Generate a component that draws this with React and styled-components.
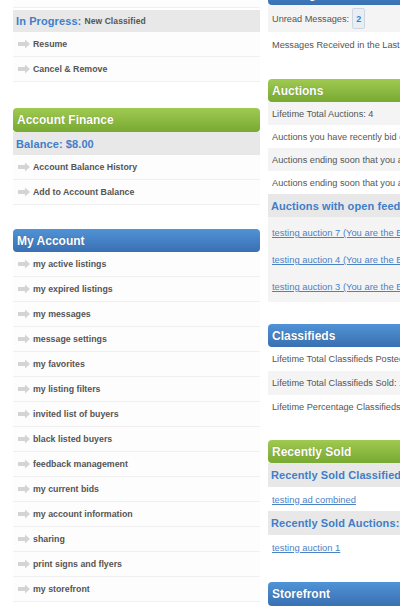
import styled, { createGlobalStyle } from "styled-components";

const GlobalStyle = createGlobalStyle`
  html, body {
    margin: 0;
    padding: 0;
    background: #fff;
    overflow: hidden;
    font-family: "Liberation Sans", Arial, sans-serif;
  }
`;

const Page = styled.div`
  display: flex;
  align-items: flex-start;
  gap: 8px;
  padding-left: 13px;
  width: 700px;
`;

const LeftColumn = styled.div`
  width: 247px;
  flex-shrink: 0;
  margin-top: -17px;
`;

const RightColumn = styled.div`
  width: 320px;
  flex-shrink: 0;
  margin-top: -18px;
`;

const Section = styled.div`
  margin-bottom: ${(p) => p.$gap ?? 24}px;
`;

const Head = styled.div`
  height: ${(p) => p.$h ?? 23}px;
  display: flex;
  align-items: center;
  padding: 0 4px;
  border-radius: 4px;
  color: #fff;
  font-weight: bold;
  font-size: 12px;
  text-shadow: 0 0 1px rgba(0, 0, 0, 0.25);
  background: ${(p) =>
    p.$tone === "green"
      ? "linear-gradient(#a0ca52, #78a932)"
      : "linear-gradient(#5093d6, #3970b2)"};
`;

const SubHead = styled.div`
  height: ${(p) => p.$h ?? 23}px;
  display: flex;
  align-items: center;
  padding: 0 3px;
  margin-top: ${(p) => p.$top ?? 0}px;
  background: #e8e8e8;
  color: #3f7ec8;
  font-weight: bold;
  font-size: 11px;
  letter-spacing: 0.1px;
  white-space: nowrap;
  overflow: hidden;
`;

const Note = styled.span`
  color: #555;
  font-size: 8.5px;
  margin-left: 3px;
`;

const Item = styled.div`
  height: 24px;
  display: flex;
  align-items: center;
  padding-left: 4px;
  gap: 2px;
  border-bottom: 1px solid #f0f0f0;
  background: #fdfdfd;
  color: #555;
  font-weight: bold;
  font-size: 8.8px;
`;

const Row = styled.div`
  height: ${(p) => p.$h ?? 23}px;
  display: flex;
  align-items: center;
  padding-left: 4px;
  background: ${(p) => (p.$shade ? "#f4f4f4" : "#fff")};
  color: #555;
  font-size: 9.2px;
  white-space: nowrap;
  overflow: hidden;
`;

const Badge = styled.span`
  display: inline-flex;
  align-items: center;
  justify-content: center;
  height: 19px;
  padding: 0 3px;
  margin-left: 3px;
  border: 1px solid #cdd7e2;
  border-radius: 2px;
  background: #e9eef4;
  color: #3f7ec8;
  font-weight: bold;
  font-size: 9px;
`;

const LinkList = styled.div`
  background: #f4f4f4;
  padding: 2px 0;
`;

const LinkRow = styled.div`
  height: ${(p) => p.$h ?? 27}px;
  display: flex;
  align-items: center;
  padding-left: 4px;
  background: ${(p) => (p.$plain ? "#fff" : "transparent")};
  white-space: nowrap;
  overflow: hidden;
`;

const Link = styled.a`
  color: #4a82c6;
  font-size: 9.4px;
  text-decoration: underline;
`;

function Arrow() {
  return (
    <svg width="14" height="10" viewBox="0 0 14 10">
      <polygon points="1,3 8,3 8,0.5 13,5 8,9.5 8,7 1,7" fill="#d4d4d4" />
    </svg>
  );
}

const myAccount = [
  "my active listings",
  "my expired listings",
  "my messages",
  "message settings",
  "my favorites",
  "my listing filters",
  "invited list of buyers",
  "black listed buyers",
  "feedback management",
  "my current bids",
  "my account information",
  "sharing",
  "print signs and flyers",
  "my storefront",
];

const feedbackLinks = [
  "testing auction 7 (You are the Buyer)",
  "testing auction 4 (You are the Buyer)",
  "testing auction 3 (You are the Buyer)",
];

export default function App() {
  return (
    <>
      <GlobalStyle />
      <Page>
        <LeftColumn>
          <Section $gap={26}>
            <Item>
              <Arrow />
              Edit
            </Item>
            <SubHead $top={2} $h={22}>
              In Progress:<Note>New Classified</Note>
            </SubHead>
            <Item>
              <Arrow />
              Resume
            </Item>
            <Item>
              <Arrow />
              Cancel &amp; Remove
            </Item>
          </Section>

          <Section $gap={24}>
            <Head $tone="green" $h={24}>Account Finance</Head>
            <SubHead>Balance: $8.00</SubHead>
            <Item>
              <Arrow />
              Account Balance History
            </Item>
            <Item>
              <Arrow />
              Add to Account Balance
            </Item>
          </Section>

          <Section>
            <Head $tone="blue">My Account</Head>
            {myAccount.map((label) => (
              <Item key={label}>
                <Arrow />
                {label}
              </Item>
            ))}
          </Section>
        </LeftColumn>

        <RightColumn>
          <Section $gap={22}>
            <Head $tone="blue">Messages</Head>
            <Row $shade $h={27}>
              Unread Messages:<Badge>2</Badge>
            </Row>
            <Row $h={25}>Messages Received in the Last 7 Days: 0</Row>
          </Section>

          <Section $gap={22}>
            <Head $tone="green">Auctions</Head>
            <Row $shade>Lifetime Total Auctions: 4</Row>
            <Row>Auctions you have recently bid on: 0</Row>
            <Row $shade>Auctions ending soon that you are winning: 0</Row>
            <Row>Auctions ending soon that you are losing: 0</Row>
            <SubHead>Auctions with open feedback: 3</SubHead>
            <LinkList>
              {feedbackLinks.map((t) => (
                <LinkRow key={t}>
                  <Link href="#">{t}</Link>
                </LinkRow>
              ))}
            </LinkList>
          </Section>

          <Section $gap={21}>
            <Head $tone="blue">Classifieds</Head>
            <Row $h={24}>Lifetime Total Classifieds Posted: 3</Row>
            <Row $shade $h={24}>Lifetime Total Classifieds Sold: 1</Row>
            <Row $h={24}>Lifetime Percentage Classifieds Sold: 33%</Row>
          </Section>

          <Section $gap={23}>
            <Head $tone="green">Recently Sold</Head>
            <SubHead $h={24}>Recently Sold Classifieds: 1</SubHead>
            <LinkRow $plain $h={24}>
              <Link href="#">testing ad combined</Link>
            </LinkRow>
            <SubHead $h={24}>Recently Sold Auctions: 1</SubHead>
            <LinkRow $plain $h={24}>
              <Link href="#">testing auction 1</Link>
            </LinkRow>
          </Section>

          <Section>
            <Head $tone="blue" $h={24}>Storefront</Head>
            <Row>Storefront Status: Active</Row>
          </Section>
        </RightColumn>
      </Page>
    </>
  );
}
